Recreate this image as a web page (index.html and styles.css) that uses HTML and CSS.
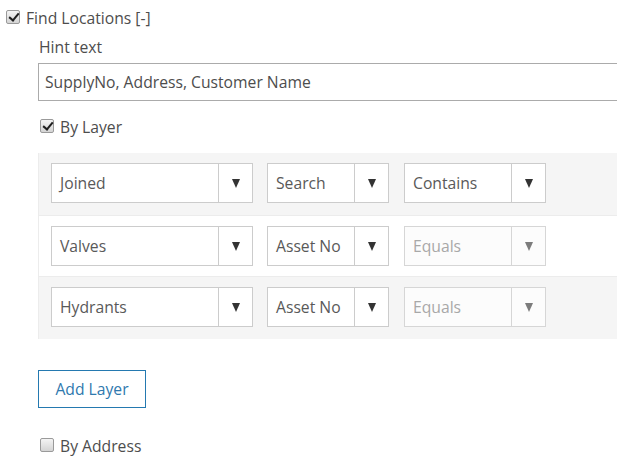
FILE: index.html
```html
<!DOCTYPE html>
<html lang="en">
<head>
    <meta charset="UTF-8">
    <title>Find Locations</title>
    <link rel="stylesheet" href="styles.css">
</head>
<body>
    <div class="toggle-row top">
        <span class="check checked"></span>
        <span>Find Locations [-]</span>
    </div>

    <div class="section">
        <label class="hint-label">Hint text</label>
        <input class="hint-input" type="text" value="SupplyNo, Address, Customer Name">

        <div class="toggle-row by-layer">
            <span class="check checked"></span>
            <span>By Layer</span>
        </div>

        <div class="layer-panel">
            <div class="layer-row">
                <div class="select wide"><span class="value">Joined</span><span class="arrow"></span></div>
                <div class="select mid"><span class="value">Search</span><span class="arrow"></span></div>
                <div class="select op"><span class="value">Contains</span><span class="arrow"></span></div>
            </div>
            <div class="layer-row">
                <div class="select wide"><span class="value">Valves</span><span class="arrow"></span></div>
                <div class="select mid"><span class="value">Asset No</span><span class="arrow"></span></div>
                <div class="select op disabled"><span class="value">Equals</span><span class="arrow"></span></div>
            </div>
            <div class="layer-row">
                <div class="select wide"><span class="value">Hydrants</span><span class="arrow"></span></div>
                <div class="select mid"><span class="value">Asset No</span><span class="arrow"></span></div>
                <div class="select op disabled"><span class="value">Equals</span><span class="arrow"></span></div>
            </div>
        </div>

        <button class="add-layer">Add Layer</button>

        <div class="toggle-row by-address">
            <span class="check"></span>
            <span>By Address</span>
        </div>
    </div>
</body>
</html>
```

FILE: styles.css
```css
/* General */
* {
    box-sizing: border-box;
    margin: 0;
    padding: 0;
}

body {
    font-family: 'Open Sans', 'Lato', sans-serif;
    font-size: 15.7px;
    color: #4d4d4d;
    background: #ffffff;
    width: 617px;
    overflow: hidden;
}

/* Checkbox rows */
.toggle-row {
    display: flex;
    align-items: center;
    gap: 6px;
    height: 24px;
    line-height: 24px;
}

.toggle-row.top {
    padding-left: 6px;
    margin-top: 6px;
}

.check {
    width: 14px;
    height: 14px;
    margin-top: -3px;
    border: 1px solid #9a9a9a;
    border-radius: 2px;
    background: linear-gradient(#f4f4f4, #d4d4d4);
    position: relative;
    flex-shrink: 0;
}

.check.checked::after {
    content: '';
    position: absolute;
    left: 4px;
    top: 0px;
    width: 4px;
    height: 8px;
    border: solid #1e1e1e;
    border-width: 0 2.5px 2.5px 0;
    transform: rotate(40deg);
}

.section {
    padding-left: 38px;
}

.hint-label {
    display: block;
    margin-top: 6px;
    padding-left: 1px;
    line-height: 22px;
}

.hint-input {
    display: block;
    width: 600px;
    height: 38px;
    margin-top: 5px;
    padding: 0 6px;
    border: 1px solid #ababab;
    font-family: inherit;
    font-size: inherit;
    color: #4d4d4d;
    outline: none;
}

.toggle-row.by-layer {
    margin-top: 14px;
    padding-left: 2px;
}

/* Layer table */
.layer-panel {
    margin-top: 14px;
    border-left: 1px solid #ececec;
    width: 579px;
}

.layer-row {
    display: flex;
    gap: 14px;
    height: 62px;
    padding: 10px 0 0 12px;
    background: #f5f5f5;
}

.layer-row:nth-child(2) {
    background: #ffffff;
    border-top: 1px solid #ececec;
    border-bottom: 1px solid #ececec;
}

.select {
    display: flex;
    height: 40px;
    border: 1px solid #cccccc;
    background: #ffffff;
}

.select.wide { width: 202px; }
.select.mid { width: 122px; }
.select.op { width: 142px; margin-left: 1px; }

.select .value {
    flex: 1;
    padding-left: 8px;
    line-height: 38px;
    color: #595959;
    white-space: nowrap;
    overflow: hidden;
}

/* Dropdown caret */
.select .arrow {
    width: 34px;
    border-left: 1px solid #cccccc;
    display: flex;
    align-items: center;
    justify-content: center;
}

.select .arrow::after {
    content: '';
    border-left: 4.5px solid transparent;
    border-right: 4.5px solid transparent;
    border-top: 9px solid #333333;
}

.select.disabled {
    background: #fcfcfc;
    border-color: #d6d6d6;
}

.select.disabled .value {
    color: #a8a8a8;
}

.select.disabled .arrow {
    border-left-color: #d6d6d6;
}

.select.disabled .arrow::after {
    border-top-color: #7c7c7c;
}

/* Buttons */
.add-layer {
    display: block;
    margin-top: 31px;
    width: 108px;
    height: 38px;
    border: 1px solid #2479b0;
    background: #ffffff;
    color: #2f79ae;
    font-family: inherit;
    font-size: inherit;
    cursor: pointer;
}

.toggle-row.by-address {
    margin-top: 26px;
    padding-left: 2px;
}
```
